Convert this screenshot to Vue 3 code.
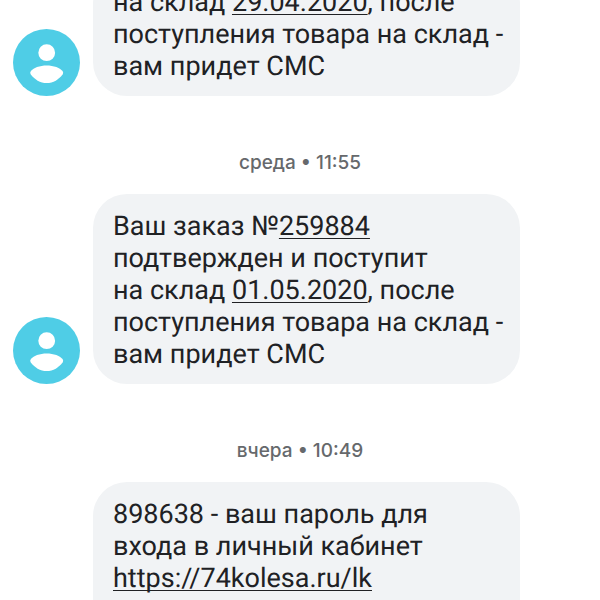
<script setup>
const messages = [
  {
    id: 1,
    lines: [
      [{ text: 'на склад ' }, { text: '29.04.2020', href: '#29.04.2020' }, { text: ', после' }],
      [{ text: 'поступления товара на склад -' }],
      [{ text: 'вам придет СМС' }],
    ],
  },
  {
    id: 2,
    stamp: 'среда • 11:55',
    lines: [
      [{ text: 'Ваш заказ №' }, { text: '259884', href: '#259884' }],
      [{ text: 'подтвержден и поступит' }],
      [{ text: 'на склад ' }, { text: '01.05.2020', href: '#01.05.2020' }, { text: ', после' }],
      [{ text: 'поступления товара на склад -' }],
      [{ text: 'вам придет СМС' }],
    ],
  },
  {
    id: 3,
    stamp: 'вчера • 10:49',
    continues: true,
    lines: [
      [{ text: '898638 - ваш пароль для' }],
      [{ text: 'входа в личный кабинет' }],
      [{ text: 'https://74kolesa.ru/lk', href: 'https://74kolesa.ru/lk' }],
    ],
  },
]
</script>

<template>
  <main class="viewport">
    <div class="thread">
      <section v-for="message in messages" :key="message.id" class="entry">
        <p v-if="message.stamp" class="stamp">{{ message.stamp }}</p>
        <div class="row">
          <div class="sender">
            <svg v-if="!message.continues" class="avatar" viewBox="0 0 67 67" aria-hidden="true">
              <circle cx="33.5" cy="33.5" r="33.5" fill="#4fcde6" />
              <circle cx="33.7" cy="23.7" r="8.4" fill="#fff" />
              <path d="M17.6 42.600C20 38.600 27 36.400 33.700 36.400S47.400 38.600 49.800 42.600C50.300 43.500 50.200 44.300 49.700 45.200C46 50.500 40.200 54 33.700 54S21.400 50.500 17.700 45.200C17.200 44.300 17.100 43.500 17.600 42.600Z" fill="#fff" />
            </svg>
          </div>
          <div class="bubble" :class="{ continues: message.continues }">
            <div v-for="(line, i) in message.lines" :key="i" class="line">
              <template v-for="(part, j) in line" :key="j"><a v-if="part.href" :href="part.href">{{ part.text }}</a><template v-else>{{ part.text }}</template></template>
            </div>
          </div>
        </div>
      </section>
    </div>
  </main>
</template>

<style>
body {
  margin: 0;
  background: #fff;
}
</style>

<style scoped>
.viewport {
  height: 100vh;
  overflow: hidden;
  font-family: Roboto, "Noto Sans", sans-serif;
  color: #202124;
}
.thread {
  margin-top: -30px;
}
.stamp {
  margin: 0;
  padding: 55px 0 19px;
  font-family: Inter, Roboto, sans-serif;
  font-size: 19px;
  font-weight: 500;
  line-height: 24px;
  text-align: center;
  color: #66696c;
}
.row {
  display: flex;
  align-items: flex-end;
  gap: 13px;
  padding: 0 80px 0 13px;
}
.sender {
  flex: none;
  width: 67px;
}
.avatar {
  display: block;
  width: 100%;
}
.bubble {
  flex: 1;
  min-width: 0;
  padding: 16px 16px 14px 20px;
  border-radius: 34px;
  background: #f1f3f5;
  font-size: 27px;
  line-height: 32px;
  text-rendering: geometricPrecision;
}
.bubble.continues {
  padding-bottom: 48px;
}
.line {
  white-space: pre;
}
a {
  color: inherit;
  text-decoration: underline;
  text-decoration-thickness: 1px;
  text-decoration-skip-ink: none;
  text-underline-offset: 3px;
}
</style>
